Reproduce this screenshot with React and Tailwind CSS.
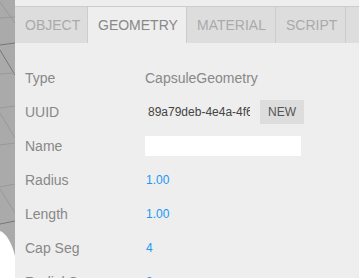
const tabs = [
  { name: "Object", w: "w-[73px]" },
  { name: "Geometry", w: "w-[99px]", selected: true },
  { name: "Material", w: "w-[89px]" },
  { name: "Script", w: "w-[70px]" },
];

const Row = ({ label, children }) => (
  <div className="flex items-center h-[24px] shrink-0">
    <span className="w-[120px] shrink-0 text-[14px] text-[#888]">{label}</span>
    {children}
  </div>
);

const Num = ({ value }) => (
  <span className="ml-[1px] text-[12px] text-[#2196f3]">{value}</span>
);

const Viewport = () => (
  <div className="w-[15px] shrink-0 bg-[#aaa]">
    <svg width="15" height="278" viewBox="0 0 15 278">
      <g fill="none" strokeWidth="1">
        <line x1="0" y1="2" x2="15" y2="23" stroke="#999" />
        <line x1="0" y1="18" x2="15" y2="17" stroke="#999" />
        <line x1="0" y1="45" x2="15" y2="43" stroke="#777" />
        <line x1="0" y1="50" x2="15" y2="75" stroke="#777" />
        <line x1="0" y1="74" x2="15" y2="73" stroke="#999" />
        <line x1="0" y1="108" x2="15" y2="106" stroke="#999" />
        <line x1="0" y1="113" x2="15" y2="138" stroke="#999" />
        <line x1="0" y1="145" x2="15" y2="143" stroke="#999" />
        <line x1="0" y1="187" x2="15" y2="184" stroke="#999" />
        <line x1="0" y1="189" x2="15" y2="213" stroke="#999" />
        <line x1="0" y1="224" x2="15" y2="221" stroke="#777" />
      </g>
      <path d="M0 231 C6 233 12 243 15 256 L15 278 L0 278 Z" fill="#fff" />
    </svg>
  </div>
);

export default function App() {
  return (
    <div
      className="flex w-[359px] h-[278px] overflow-hidden bg-[#eee]"
      style={{ fontFamily: '"Liberation Sans", Arial, sans-serif' }}
    >
      <Viewport />
      <div className="flex-1 flex flex-col min-w-0">
        <div className="mt-[6px] shrink-0 flex h-[37px] border-t border-[#ccc] bg-[#ddd] overflow-hidden">
          {tabs.map((t) => (
            <div
              key={t.name}
              className={`${t.w} shrink-0 flex items-center pl-[10px] border-r border-[#ccc] text-[14px] uppercase whitespace-nowrap ${
                t.selected ? "bg-[#eee] text-[#888]" : "text-[#aaa]"
              }`}
            >
              {t.name}
            </div>
          ))}
        </div>

        <div className="flex flex-col gap-[10px] pl-[10px] pt-[23px] shrink-0">
          <Row label="Type">
            <span className="text-[14px] text-[#888]">CapsuleGeometry</span>
          </Row>
          <Row label="UUID">
            <input
              readOnly
              value="89a79deb-4e4a-4f63-b1c2-7d5e0a3f9b21"
              className="w-[108px] px-[2px] border border-transparent text-[12px] text-[#444] bg-transparent outline-none"
            />
            <button className="ml-[7px] h-[24px] px-[8px] bg-[#ddd] text-[12px] text-[#555] uppercase">
              New
            </button>
          </Row>
          <Row label="Name">
            <input className="w-[156px] h-[20px] px-[2px] bg-white text-[12px] outline-none" />
          </Row>
          <Row label="Radius">
            <Num value="1.00" />
          </Row>
          <Row label="Length">
            <Num value="1.00" />
          </Row>
          <Row label="Cap Seg">
            <Num value="4" />
          </Row>
          <Row label="Radial Seg">
            <Num value="8" />
          </Row>
        </div>
      </div>
    </div>
  );
}
